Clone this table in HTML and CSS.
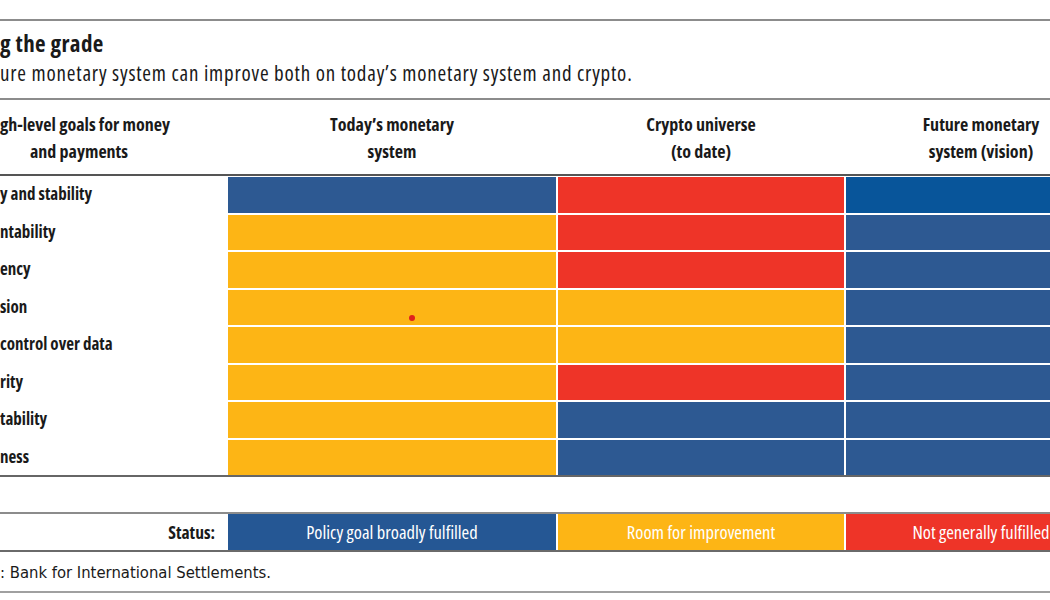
FILE: index.html
```html
<!DOCTYPE html>
<html lang="en">
<head>
<meta charset="utf-8">
<title>Making the grade</title>
<link rel="stylesheet" href="styles.css">
</head>
<body>
<div class="chart">
  <div class="rule top-rule"></div>
  <div class="heading">
    <div class="title">g the grade</div>
    <div class="subtitle">ure monetary system can improve both on today’s monetary system and crypto.</div>
  </div>
  <div class="rule"></div>

  <div class="grid head-row">
    <div class="hcell goals"><span class="l1">gh-level goals for money</span><span class="l2">and payments</span></div>
    <div class="hcell">Today’s monetary<br>system</div>
    <div class="hcell">Crypto universe<br>(to date)</div>
    <div class="hcell">Future monetary<br>system (vision)</div>
  </div>

  <div class="grid body-rows">
    <div class="label">y and stability</div>
    <div class="cell blue"></div><div class="cell red"></div><div class="cell blue2"></div>

    <div class="label">ntability</div>
    <div class="cell yellow"></div><div class="cell red"></div><div class="cell blue"></div>

    <div class="label">ency</div>
    <div class="cell yellow"></div><div class="cell red"></div><div class="cell blue"></div>

    <div class="label">sion</div>
    <div class="cell yellow"><span class="dot"></span></div><div class="cell yellow"></div><div class="cell blue"></div>

    <div class="label">control over data</div>
    <div class="cell yellow"></div><div class="cell yellow"></div><div class="cell blue"></div>

    <div class="label">rity</div>
    <div class="cell yellow"></div><div class="cell red"></div><div class="cell blue"></div>

    <div class="label">tability</div>
    <div class="cell yellow"></div><div class="cell blue"></div><div class="cell blue"></div>

    <div class="label">ness</div>
    <div class="cell yellow"></div><div class="cell blue"></div><div class="cell blue"></div>
  </div>

  <div class="grid status-row">
    <div class="status-label">Status:</div>
    <div class="scell blue">Policy goal broadly fulfilled</div>
    <div class="scell yellow">Room for improvement</div>
    <div class="scell red">Not generally fulfilled</div>
  </div>

  <div class="source">: Bank for International Settlements.</div>
  <div class="rule bottom-rule"></div>
</div>
</body>
</html>
```

FILE: styles.css
```css
html, body {
  margin: 0;
  padding: 0;
  overflow: hidden;
  background: #ffffff;
}

body {
  font-family: "Open Sans", "DejaVu Sans Condensed", sans-serif;
  font-stretch: 75%;
  color: #1a1a1a;
}

.chart {
  width: 1116px;
  padding-top: 19px;
}

.rule {
  height: 0;
  border-top: 2px solid #8c8c8c;
}

.heading {
  height: 77px;
  display: flex;
  flex-direction: column;
}

.title {
  font-weight: bold;
  font-size: 23px;
  letter-spacing: 0.4px;
  line-height: 24px;
  margin-top: 10px;
}

.subtitle {
  font-size: 21px;
  letter-spacing: 0.8px;
  line-height: 24px;
  margin-top: 6px;
}

.grid {
  display: grid;
  grid-template-columns: 226px 328px 286px 270px;
  column-gap: 2px;
}

.head-row {
  height: 74px;
  border-bottom: 2px solid #555555;
  align-items: center;
}

.hcell {
  text-align: center;
  font-weight: bold;
  font-size: 18px;
  line-height: 27px;
  padding-top: 2px;
}

.hcell.goals {
  text-align: left;
  display: flex;
  flex-direction: column;
}

.hcell.goals .l2 {
  padding-left: 30px;
}

.body-rows {
  grid-auto-rows: 35.5px;
  row-gap: 2px;
  padding-top: 1px;
  border-bottom: 2px solid #666666;
}

.label {
  font-weight: bold;
  font-size: 17px;
  display: flex;
  align-items: center;
  padding-bottom: 2px;
}

.cell {
  position: relative;
}

.blue { background: #2d5992; }
.blue2 { background: #08559a; }
.yellow { background: #fdb515; }
.red { background: #ee3428; }

.dot {
  position: absolute;
  left: 181px;
  top: 25px;
  width: 6px;
  height: 6px;
  border-radius: 50%;
  background: #e0201c;
}

.status-row {
  margin-top: 35px;
  height: 36px;
  border-top: 2px solid #8c8c8c;
  border-bottom: 2px solid #6a6a6a;
}

.status-label {
  font-weight: bold;
  font-size: 17.5px;
  text-align: right;
  padding-right: 11px;
  padding-bottom: 1px;
  display: flex;
  align-items: center;
  justify-content: flex-end;
}

.scell {
  color: #ffffff;
  font-size: 18.5px;
  padding-bottom: 1px;
  display: flex;
  align-items: center;
  justify-content: center;
}

.scell.blue { background: #255794; }

.source {
  font-family: "DejaVu Sans Condensed", sans-serif;
  font-stretch: normal;
  font-size: 16.5px;
  line-height: 20px;
  padding: 11px 0 8px 0;
}

.bottom-rule {
  border-top-color: #a0a0a0;
}
```
